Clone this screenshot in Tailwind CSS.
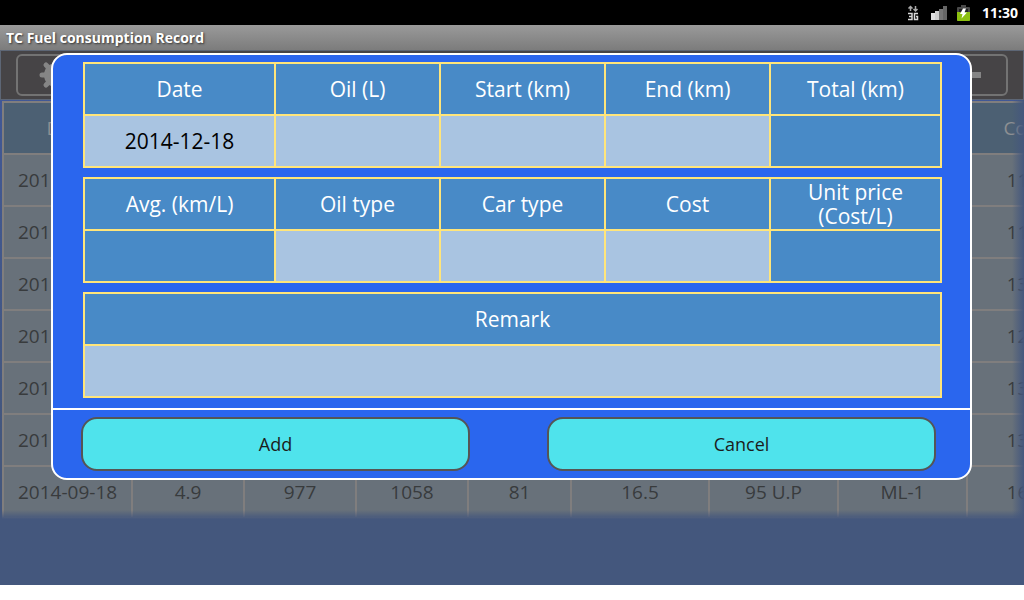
<!DOCTYPE html>
<html lang="en">
<head>
    <meta charset="UTF-8">
    <meta name="viewport" content="width=device-width, initial-scale=1.0">
    <title>TC Fuel consumption Record</title>
    <script src="https://cdn.jsdelivr.net/npm/@tailwindcss/browser@4"></script>
</head>
<body class="bg-white font-['Open_Sans','Noto_Sans',sans-serif]">
    <div class="h-screen flex flex-col pb-[15px] overflow-hidden">

        <!-- Status bar -->
        <div class="h-[25px] shrink-0 bg-black flex items-center justify-end pr-[6px] text-white">
            <svg class="w-[12px] h-[16px] mr-[12px]" viewBox="0 0 12 16" fill="none">
                <path d="M3.500 6V2M1.500 3.500L3.500 1.500L5.500 3.500M8.500 1V5.500M6.500 4L8.500 6L10.500 4" stroke="#aaa" stroke-width="1.500"/>
                <path d="M1 8.500H5V14.500H1M2 11.500H5M11 8.500H7.500V14.500H10.500V11.500H9" stroke="#d8d8d8" stroke-width="1.500"/>
            </svg>
            <svg class="w-[16px] h-[14px] mr-[10px]" viewBox="0 0 16 14">
                <path d="M0 7h4v7H0z" fill="#e0e0e0"/>
                <path d="M4 5h4v9H4z" fill="#d0d0d0"/>
                <path d="M8 3h4v11H8z" fill="#777"/>
                <path d="M12 0h4v14h-4z" fill="#666"/>
            </svg>
            <svg class="w-[13px] h-[16px] mr-[12px]" viewBox="0 0 13 16">
                <path d="M4 0h5v2h3q1 0 1 1v12q0 1-1 1H1q-1 0-1-1V3q0-1 1-1h3z" fill="#4a4a4a"/>
                <path d="M2 4h9v3H2z" fill="#222"/>
                <path d="M0 7h13v8q0 1-1 1H1q-1 0-1-1z" fill="#8cc010"/>
                <path d="M6 3.500L3 9h2.500L4.500 13.500L10 7.500H7.500L9 3.500z" fill="#fff"/>
            </svg>
            <span class="text-[14px] leading-[20px] font-bold">11:30</span>
        </div>

        <!-- Title bar -->
        <header class="h-[25px] shrink-0 bg-linear-to-b from-[#9a9a9a] to-[#7c7c7c] flex items-center px-[6px]">
            <h1 class="text-[14px] leading-[22px] font-bold text-white text-shadow-[1px_1px_2px_#333]">TC Fuel consumption Record</h1>
        </header>

        <main class="relative grow bg-linear-to-b from-[#40589a] to-[#44577d] to-75% overflow-hidden">
            <!-- Toolbar -->
            <div class="h-[50px] bg-[#464446] border border-[#5d6675] flex justify-between px-[15px] pt-[3px]">
                <button aria-label="Settings" class="w-[80px] h-[42px] border-2 border-[#737373] rounded-[6px] flex items-center pl-[21px]">
                    <svg class="w-[34px] h-[34px]" viewBox="-17 -17 34 34" fill="#858585" stroke="#858585" stroke-width="5" stroke-linecap="round">
                        <circle r="12" stroke="none"/>
                        <path d="M-14 0H14M0-14V14M-10-10L10 10M-10 10L10-10"/>
                    </svg>
                </button>
                <button aria-label="Delete" class="w-[80px] h-[42px] border-2 border-[#737373] rounded-[6px] flex items-center justify-end pr-[25px]">
                    <svg class="w-[24px] h-[6px]" viewBox="0 0 24 6" fill="#858585"><path d="M0 0h24v6H0z"/></svg>
                </button>
            </div>

            <!-- Records -->
            <div class="relative pl-[2px] pt-px overflow-hidden">
                <table class="table-fixed w-[1078px] border-collapse text-[19px] leading-[26px] text-center text-[#383b3d] bg-[#68717a]">
                    <colgroup>
                        <col class="w-[129px]"><col class="w-[112px]"><col class="w-[112px]"><col class="w-[112px]"><col class="w-[103px]"><col class="w-[138px]"><col class="w-[129px]"><col class="w-[129px]"><col class="w-[112px]">
                    </colgroup>
                    <thead>
                        <tr class="h-[52px] bg-[#4c6073] text-[#8c8f92]">
                            <th class="border-2 border-[#807e7e] p-0 font-normal">Date</th>
                            <th class="border-2 border-[#807e7e] p-0 font-normal">Oil</th>
                            <th class="border-2 border-[#807e7e] p-0 font-normal">Start</th>
                            <th class="border-2 border-[#807e7e] p-0 font-normal">End</th>
                            <th class="border-2 border-[#807e7e] p-0 font-normal">Total</th>
                            <th class="border-2 border-[#807e7e] p-0 font-normal">Avg.</th>
                            <th class="border-2 border-[#807e7e] p-0 font-normal">Oil type</th>
                            <th class="border-2 border-[#807e7e] p-0 font-normal">Car type</th>
                            <th class="border-2 border-[#807e7e] p-0 font-normal">Cost</th>
                        </tr>
                    </thead>
                    <tbody id="records"></tbody>
                </table>
                <div class="absolute right-0 inset-y-0 w-[12px] bg-linear-to-r from-[#44577d]/0 to-[#44577d]"></div>
                <div class="absolute inset-x-0 bottom-0 h-[9px] bg-linear-to-b from-[#44577d]/0 to-[#44577d]"></div>
            </div>

            <!-- Add record dialog -->
            <form role="dialog" aria-label="Add record" class="absolute top-[3px] left-[51px] right-[52px] bg-[#2a66ee] border-2 border-white rounded-[16px]">
                <div class="flex flex-col gap-[9px] pt-[7px] pb-[10px] pl-[30px] pr-[28px] text-[21px] leading-[24px] text-center">
                    <table class="table-fixed w-full border-collapse">
                        <colgroup>
                            <col class="w-[191px]"><col class="w-[165px]"><col class="w-[165px]"><col class="w-[165px]"><col class="w-[171px]">
                        </colgroup>
                        <tr class="h-[52px] bg-[#488ac7] text-white">
                            <th class="border-2 border-[#ffe57a] p-0 font-normal"><label for="date">Date</label></th>
                            <th class="border-2 border-[#ffe57a] p-0 font-normal"><label for="oil">Oil (L)</label></th>
                            <th class="border-2 border-[#ffe57a] p-0 font-normal"><label for="start">Start (km)</label></th>
                            <th class="border-2 border-[#ffe57a] p-0 font-normal"><label for="end">End (km)</label></th>
                            <th class="border-2 border-[#ffe57a] p-0 font-normal"><label for="total">Total (km)</label></th>
                        </tr>
                        <tr class="h-[52px] bg-[#a9c4e1]">
                            <td class="border-2 border-[#ffe57a] p-0"><input id="date" type="text" value="2014-12-18" class="block w-full h-[50px] text-center text-black"></td>
                            <td class="border-2 border-[#ffe57a] p-0"><input id="oil" type="text" class="block w-full h-[50px] text-center text-black"></td>
                            <td class="border-2 border-[#ffe57a] p-0"><input id="start" type="text" class="block w-full h-[50px] text-center text-black"></td>
                            <td class="border-2 border-[#ffe57a] p-0"><input id="end" type="text" class="block w-full h-[50px] text-center text-black"></td>
                            <td class="border-2 border-[#ffe57a] p-0 bg-[#488ac7]"><input id="total" type="text" readonly class="block w-full h-[50px] text-center text-white"></td>
                        </tr>
                    </table>

                    <table class="table-fixed w-full border-collapse">
                        <colgroup>
                            <col class="w-[191px]"><col class="w-[165px]"><col class="w-[165px]"><col class="w-[165px]"><col class="w-[171px]">
                        </colgroup>
                        <tr class="h-[52px] bg-[#488ac7] text-white">
                            <th class="border-2 border-[#ffe57a] p-0 font-normal"><label for="avg">Avg. (km/L)</label></th>
                            <th class="border-2 border-[#ffe57a] p-0 font-normal"><label for="oil-type">Oil type</label></th>
                            <th class="border-2 border-[#ffe57a] p-0 font-normal"><label for="car-type">Car type</label></th>
                            <th class="border-2 border-[#ffe57a] p-0 font-normal"><label for="cost">Cost</label></th>
                            <th class="border-2 border-[#ffe57a] p-0 font-normal"><label for="unit-price">Unit price<br>(Cost/L)</label></th>
                        </tr>
                        <tr class="h-[52px] bg-[#a9c4e1]">
                            <td class="border-2 border-[#ffe57a] p-0 bg-[#488ac7]"><input id="avg" type="text" readonly class="block w-full h-[50px] text-center text-white"></td>
                            <td class="border-2 border-[#ffe57a] p-0"><input id="oil-type" type="text" class="block w-full h-[50px] text-center text-black"></td>
                            <td class="border-2 border-[#ffe57a] p-0"><input id="car-type" type="text" class="block w-full h-[50px] text-center text-black"></td>
                            <td class="border-2 border-[#ffe57a] p-0"><input id="cost" type="text" class="block w-full h-[50px] text-center text-black"></td>
                            <td class="border-2 border-[#ffe57a] p-0 bg-[#488ac7]"><input id="unit-price" type="text" readonly class="block w-full h-[50px] text-center text-white"></td>
                        </tr>
                    </table>

                    <table class="table-fixed w-full border-collapse">
                        <tr class="h-[52px] bg-[#488ac7] text-white">
                            <th class="border-2 border-[#ffe57a] p-0 font-normal"><label for="remark">Remark</label></th>
                        </tr>
                        <tr class="h-[52px] bg-[#a9c4e1]">
                            <td class="border-2 border-[#ffe57a] p-0"><input id="remark" type="text" class="block w-full h-[50px] text-center text-black"></td>
                        </tr>
                    </table>
                </div>

                <div class="flex gap-[77px] border-t-2 border-white py-[7px] pl-[28px] pr-[34px] text-[18px] leading-[24px] text-[#1c1c1c]">
                    <button type="button" class="flex-1 h-[54px] bg-[#4fe3ec] border-2 border-[#555] rounded-[16px]">Add</button>
                    <button type="button" class="flex-1 h-[54px] bg-[#4fe3ec] border-2 border-[#555] rounded-[16px]">Cancel</button>
                </div>
            </form>
        </main>
    </div>

    <script>
        // The rows under the dialog only show their first and last columns
        const records = [
            ['201', '', '', '', '', '', '', '', '115'],
            ['201', '', '', '', '', '', '', '', '112'],
            ['201', '', '', '', '', '', '', '', '133'],
            ['201', '', '', '', '', '', '', '', '122'],
            ['201', '', '', '', '', '', '', '', '135'],
            ['201', '', '', '', '', '', '', '', '135'],
            ['2014-09-18', '4.9', '977', '1058', '81', '16.5', '95 U.P', 'ML-1', '160']
        ];

        document.getElementById('records').innerHTML = records.map(row => `
            <tr class="h-[52px]">
                ${row.map((cell, i) => `<td class="border-2 border-[#807e7e] p-0 ${i === 0 ? 'text-left pl-[14px]' : ''}">${cell}</td>`).join('')}
            </tr>
        `).join('');
    </script>
</body>
</html>
